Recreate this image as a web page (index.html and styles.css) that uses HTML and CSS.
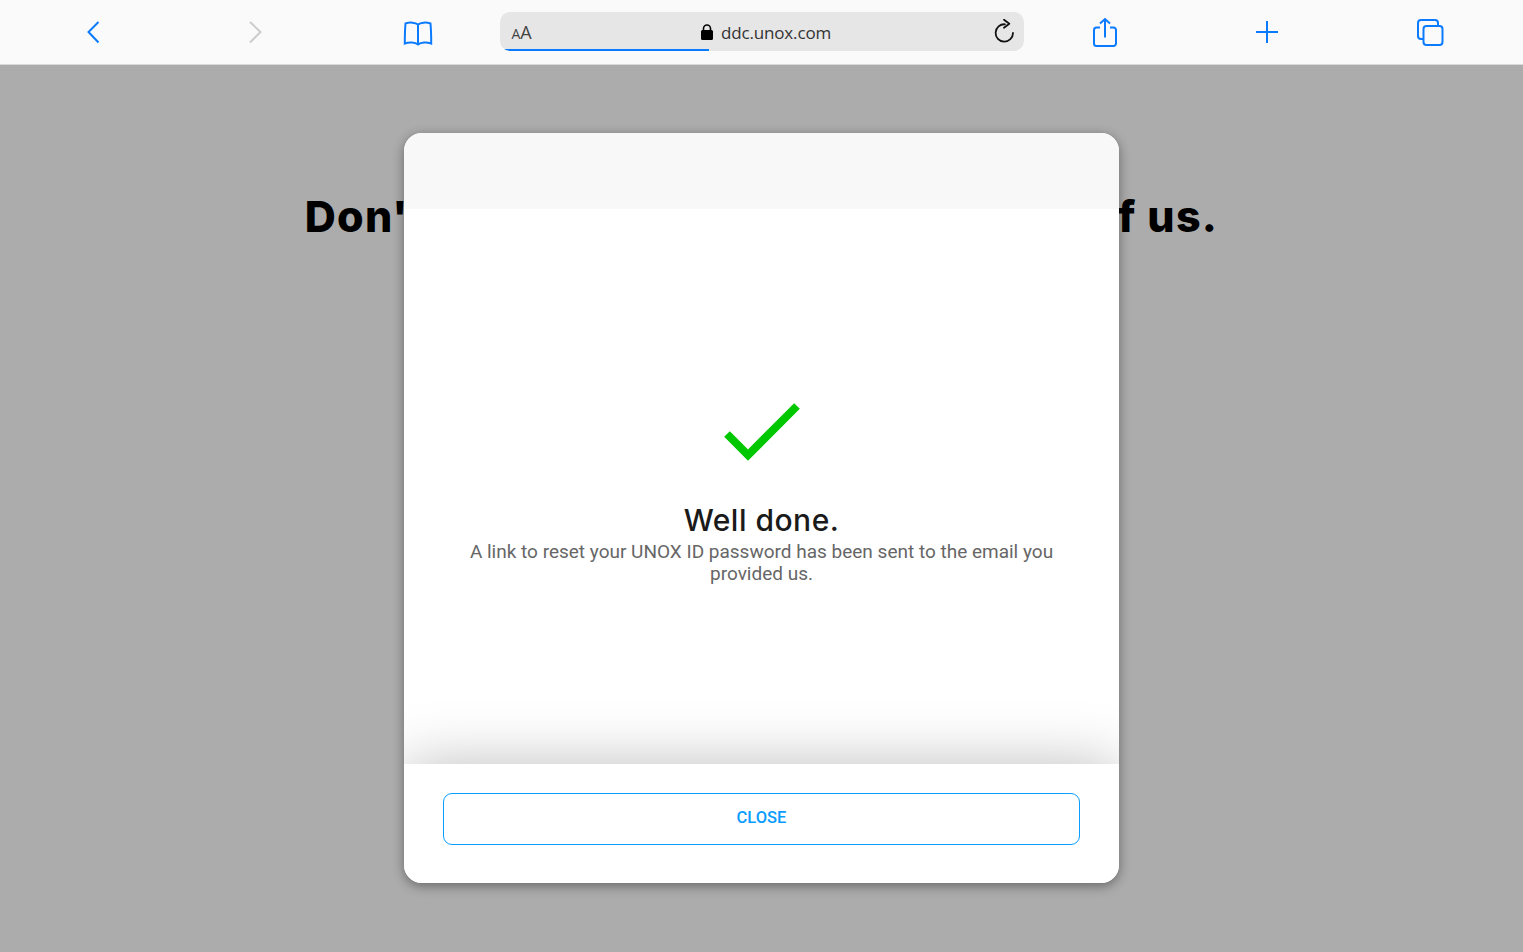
FILE: index.html
```html
<!DOCTYPE html>
<html>
<head>
  <meta charset="utf-8">
  <meta name="viewport" content="width=device-width">
  <title>Well done</title>
  <link rel="stylesheet" href="styles.css">
</head>
<body>
  <div class="toolbar">
    <div class="tool">
      <svg width="30" height="30" viewBox="0 0 30 30"><path class="line" d="M20.500 5 10.500 15 20.500 25.500"/></svg>
    </div>
    <div class="tool">
      <svg width="30" height="30" viewBox="0 0 30 30"><path class="line off" d="M9 5 19.500 15 9 25.500"/></svg>
    </div>
    <div class="tool">
      <svg width="32" height="30" viewBox="0 0 32 30"><path class="line" d="M16 7.500C13.500 5.500 8 5 3.500 6.500 3 12 2.800 20 2.800 26.500 7 25 13 25 16 27.500 19 25 25 25 29.200 26.500 29.200 20 29 12 28.500 6.500 24 5 18.500 5.500 16 7.500V27.500"/></svg>
    </div>
    <div class="address">
      <div class="aa"><span class="aa-small">A</span>A</div>
      <div class="url">
        <svg width="14" height="18" viewBox="0 0 14 18"><path d="M3.500 8V5.500a3.500 3.500 0 0 1 7 0V8" fill="none" stroke="#000" stroke-width="1.600"/><rect x="1" y="7" width="12" height="10" rx="1.500" fill="#000"/></svg>
        <span>ddc.unox.com</span>
      </div>
      <div class="reload">
        <svg width="24" height="26" viewBox="0 0 24 26"><path d="M13 5.300A8.700 8.700 0 1 0 21 14" fill="none" stroke="#111" stroke-width="1.800" stroke-linecap="round"/><path d="M12 .8 17.300 4.800 12 8.800" fill="none" stroke="#111" stroke-width="1.800" stroke-linecap="round" stroke-linejoin="round"/></svg>
      </div>
      <div class="progress"></div>
    </div>
    <div class="tool">
      <svg width="30" height="32" viewBox="0 0 30 32"><path class="line" d="M10 11.500H6.500A2.500 2.500 0 0 0 4 14v13.500A2.500 2.500 0 0 0 6.500 30h17a2.500 2.500 0 0 0 2.500-2.500V14a2.500 2.500 0 0 0-2.500-2.500H20M15 21.500V3M10 7.500 15 3l5 4.500"/></svg>
    </div>
    <div class="tool">
      <svg width="30" height="30" viewBox="0 0 30 30"><path class="line" d="M15 4v22M4 15h22"/></svg>
    </div>
    <div class="tool">
      <svg width="30" height="30" viewBox="0 0 30 30"><rect class="line" x="3" y="3" width="20" height="19" rx="3"/><rect class="line front" x="8.500" y="9" width="19" height="19" rx="3"/></svg>
    </div>
  </div>

  <div class="page">
    <h1>Don't worry, it happens to the best of us.</h1>
  </div>

  <div class="modal">
    <div class="modal-head"></div>
    <div class="modal-body">
      <svg class="check" width="80" height="64" viewBox="0 0 80 64"><path d="M4 34 25 55 74 6" fill="none" stroke="#00c800" stroke-width="8"/></svg>
      <h2>Well done.</h2>
      <p>A link to reset your UNOX ID password has been sent to the email you provided us.</p>
    </div>
    <div class="modal-foot">
      <button class="close-btn">CLOSE</button>
    </div>
  </div>
</body>
</html>
```

FILE: styles.css
```css
body {
  margin: 0;
  height: 952px;
  overflow: hidden;
  background-color: #acacac;
  font-family: Roboto, Arial, sans-serif;
}

.toolbar {
  display: grid;
  grid-template-columns: repeat(3, 1fr) 524px repeat(3, 1fr);
  height: 64px;
  padding: 0 12px;
  align-items: center;
  background-color: #fafafa;
  border-bottom: 1px solid #d9d9d9;
}

.tool {
  display: flex;
  justify-content: center;
}

.line {
  fill: none;
  stroke: #0a7bff;
  stroke-width: 2;
}

.off {
  stroke: #cccccc;
}

.front {
  fill: #fafafa;
}

.address {
  position: relative;
  display: grid;
  grid-template-columns: 1fr auto 1fr;
  align-items: center;
  height: 39px;
  margin-top: -1px;
  padding: 0 8px 0 12px;
  overflow: hidden;
  background-color: #e6e6e6;
  border-radius: 10px;
  font-family: "Open Sans", sans-serif;
  color: #333333;
}

.aa {
  font-size: 18px;
  padding-top: 1px;
  color: #444444;
}

.aa-small {
  font-size: 14px;
}

.url {
  display: flex;
  align-items: center;
  gap: 7px;
  margin-left: 4px;
  padding-top: 1px;
  font-size: 17px;
  letter-spacing: -0.15px;
}

.reload {
  display: flex;
  justify-content: flex-end;
}

.progress {
  position: absolute;
  left: 4px;
  bottom: 0;
  width: 205px;
  height: 2px;
  background-color: #0a7bff;
}

.page {
  text-align: center;
}

h1 {
  margin: 126px 0 0;
  font-family: Inter, sans-serif;
  font-size: 43px;
  line-height: 50px;
  font-weight: 800;
  letter-spacing: 1.25px;
  color: #000000;
}

.modal {
  position: absolute;
  left: 404px;
  top: 133px;
  display: flex;
  flex-direction: column;
  width: 715px;
  height: 750px;
  overflow: hidden;
  background-color: #ffffff;
  border-radius: 18px;
  box-shadow: 0 3px 12px rgba(0, 0, 0, 0.4);
}

.modal-head {
  height: 76px;
  background-color: #f8f8f8;
}

.modal-body {
  flex: 1;
  display: flex;
  flex-direction: column;
  align-items: center;
  padding: 191px 64px 0;
  text-align: center;
}

.check {
  display: block;
  margin-left: 2px;
}

h2 {
  margin: 39px 0 0;
  font-family: Inter, sans-serif;
  font-size: 30px;
  line-height: 34px;
  font-weight: 500;
  letter-spacing: 0.5px;
  color: #1a1a1a;
}

p {
  margin: 4px 0 0;
  font-size: 19px;
  line-height: 22px;
  color: #666666;
}

.modal-foot {
  position: relative;
  display: flex;
  height: 119px;
  box-sizing: border-box;
  padding: 29px 39px 38px;
  background-color: #ffffff;
  box-shadow: 0 0 60px rgba(0, 0, 0, 0.26);
}

.close-btn {
  flex: 1;
  padding: 0 0 4px;
  background-color: #ffffff;
  border: 1px solid #0a9dff;
  border-radius: 9px;
  font-family: Roboto, Arial, sans-serif;
  font-size: 16.500px;
  font-weight: 500;
  color: #0a9dff;
}
```
